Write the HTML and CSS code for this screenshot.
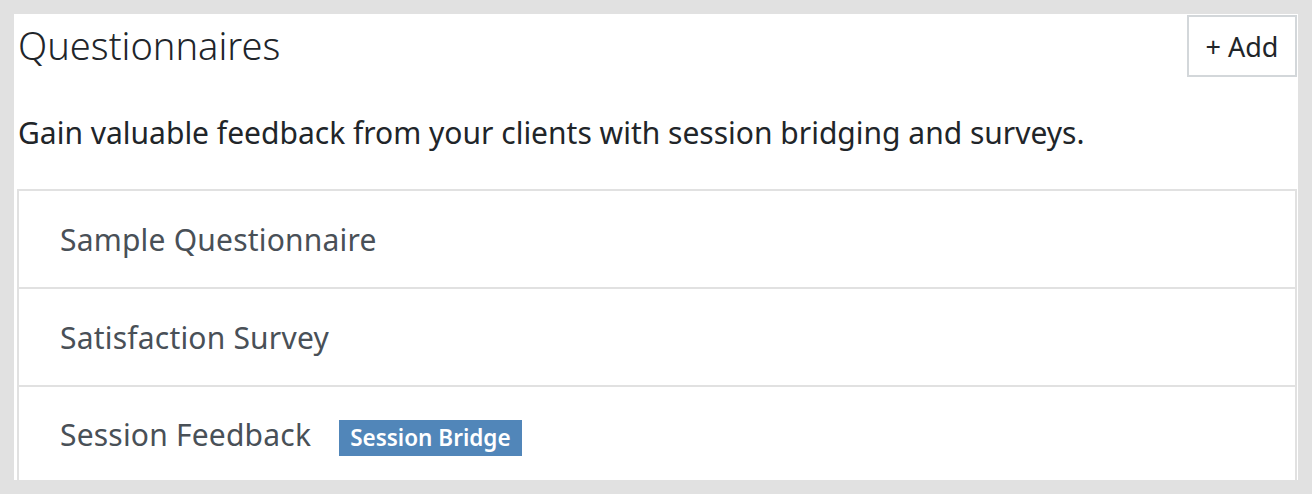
FILE: index.html
```html
<!DOCTYPE html>
<html lang="en">
<head>
<meta charset="utf-8">
<title>Questionnaires</title>
<link rel="stylesheet" href="styles.css">
</head>
<body>
<main class="panel">
  <header class="panel-header">
    <h1 class="title">Questionnaires</h1>
    <button class="add-btn" type="button">+ Add</button>
  </header>
  <p class="desc">Gain valuable feedback from your clients with session bridging and surveys.</p>
  <ul class="list">
    <li class="row"><span class="row-name">Sample Questionnaire</span></li>
    <li class="row"><span class="row-name">Satisfaction Survey</span></li>
    <li class="row"><span class="row-name">Session Feedback<span class="badge">Session Bridge</span></span></li>
  </ul>
</main>
</body>
</html>
```

FILE: styles.css
```css
html, body {
  margin: 0;
  padding: 0;
}
body {
  background: #e1e1e1;
  padding: 14px;
  font-family: "Noto Sans", "Open Sans", sans-serif;
  color: #212529;
}
.panel {
  background: #ffffff;
  height: 466px;
  overflow: hidden;
  padding: 0 1px 0 3px;
  box-sizing: border-box;
}
.panel-header {
  display: flex;
  justify-content: space-between;
  align-items: flex-start;
}
.title {
  margin: 0;
  padding: 1px 0 0 1px;
  font-size: 38px;
  font-weight: 300;
  line-height: 60px;
  color: #21252a;
}
.add-btn {
  margin-top: 1px;
  width: 110px;
  height: 62px;
  background: #ffffff;
  border: 2px solid #d3d7da;
  font-family: inherit;
  font-size: 27px;
  color: #212529;
  padding: 0;
}
.desc {
  margin: 36px 0 0 1px;
  font-size: 30px;
  line-height: 40px;
  color: #212529;
}
.list {
  list-style: none;
  margin: 36px 0 0 0;
  padding: 0;
  border: 2px solid #e1e1e1;
}
.row {
  display: flex;
  align-items: center;
  height: 96px;
  padding: 0 0 0 41px;
  border-top: 2px solid #e1e1e1;
}
.row:first-child {
  border-top: none;
}
.row-name {
  font-size: 30px;
  letter-spacing: 0.2px;
  color: #495057;
}
.badge {
  display: inline-block;
  vertical-align: baseline;
  margin-left: 28px;
  background: #5186b9;
  color: #ffffff;
  font-size: 22.5px;
  font-weight: 600;
  letter-spacing: 0;
  line-height: 36px;
  padding: 0 11px;
}
```
